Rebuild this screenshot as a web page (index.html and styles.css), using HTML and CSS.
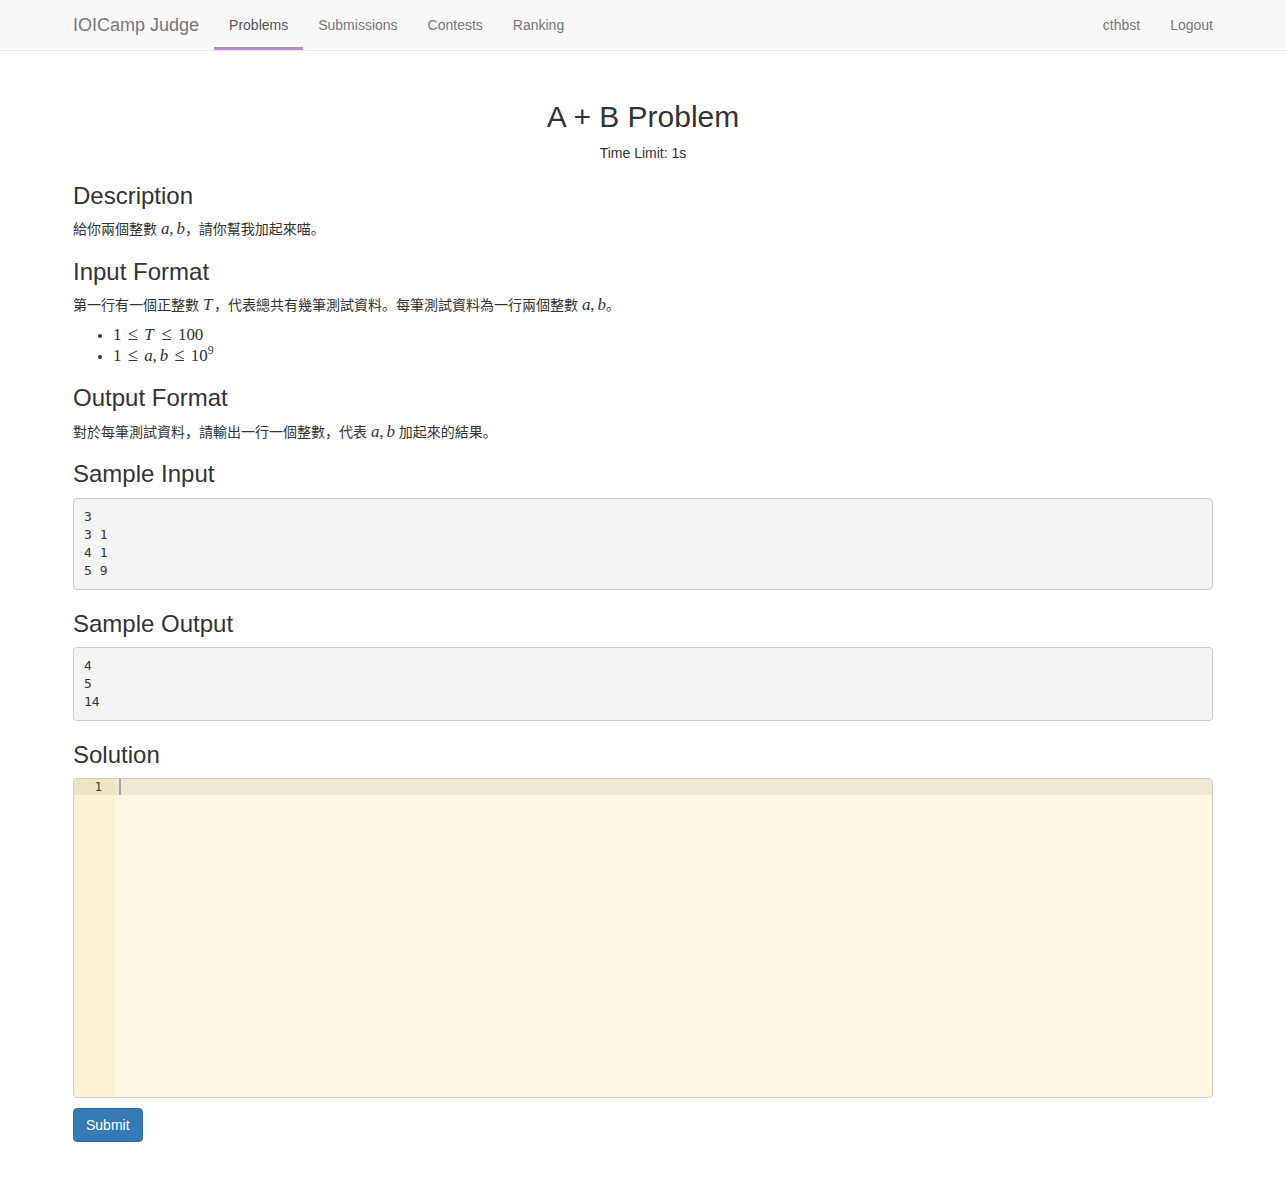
FILE: index.html
```html
<!DOCTYPE html>
<html lang="en">
<head>
<meta charset="utf-8">
<title>A + B Problem - IOICamp Judge</title>
<link rel="stylesheet" href="styles.css">
</head>
<body>
<nav class="navbar">
  <div class="container nav-inner">
    <a class="brand" href="#">IOICamp Judge</a>
    <ul class="nav">
      <li class="active"><a href="#">Problems</a></li>
      <li><a href="#">Submissions</a></li>
      <li><a href="#">Contests</a></li>
      <li><a href="#">Ranking</a></li>
    </ul>
    <ul class="nav nav-right">
      <li><a href="#">cthbst</a></li>
      <li><a href="#">Logout</a></li>
    </ul>
  </div>
</nav>

<main class="container main">
  <h2 class="title">A + B Problem</h2>
  <div class="limit">Time Limit: 1s</div>

  <h3>Description</h3>
  <p>給你兩個整數 <span class="math"><i>a</i>,<span class="thin"></span><i>b</i></span>，請你幫我加起來喵。</p>

  <h3>Input Format</h3>
  <p>第一行有一個正整數 <span class="math"><i class="wide">T</i></span>，代表總共有幾筆測試資料。每筆測試資料為一行兩個整數 <span class="math"><i>a</i>,<span class="thin"></span><i>b</i></span>。</p>
  <ul class="list">
    <li><span class="math">1<span class="rel">≤</span><i class="wide">T</i><span class="rel">≤</span>100</span></li>
    <li><span class="math">1<span class="rel">≤</span><i>a</i>,<span class="thin"></span><i>b</i><span class="rel">≤</span>10<sup>9</sup></span></li>
  </ul>

  <h3>Output Format</h3>
  <p>對於每筆測試資料，請輸出一行一個整數，代表 <span class="math"><i>a</i>,<span class="thin"></span><i>b</i></span> 加起來的結果。</p>

  <h3>Sample Input</h3>
  <pre>3
3 1
4 1
5 9</pre>

  <h3>Sample Output</h3>
  <pre>4
5
14</pre>

  <h3>Solution</h3>
  <div class="editor">
    <div class="gutter">
      <div class="gutter-cell active">1</div>
    </div>
    <div class="code">
      <div class="code-line active"><span class="cursor"></span></div>
    </div>
  </div>
  <button class="btn" type="button">Submit</button>
</main>
</body>
</html>
```

FILE: styles.css
```css
* { box-sizing: border-box; }

html, body {
  margin: 0;
  padding: 0;
}

body {
  font-family: "Liberation Sans", "Noto Sans CJK SC", sans-serif;
  font-size: 14px;
  line-height: 20px;
  color: #333;
  background: #fff;
}

a { text-decoration: none; }

.container {
  width: 1170px;
  margin: 0 auto;
  padding: 0 15px;
}

.navbar {
  height: 51px;
  background: #f8f8f8;
  border-bottom: 1px solid #e7e7e7;
}

.nav-inner {
  display: flex;
  align-items: stretch;
  height: 50px;
}

.brand {
  margin-left: -15px;
  padding: 15px;
  font-size: 18px;
  line-height: 20px;
  color: #777;
}

.nav {
  display: flex;
  list-style: none;
  margin: 0;
  padding: 0;
}

.nav li a {
  display: block;
  padding: 15px 15px 12px;
  line-height: 20px;
  color: #777;
  border-bottom: 3px solid transparent;
}

.nav li.active a {
  color: #555;
  border-bottom-color: #b28fd6;
}

.nav-right {
  margin-left: auto;
  margin-right: -15px;
}

.main {
  padding-top: 49px;
  padding-bottom: 40px;
}

.title {
  font-size: 30px;
  font-weight: 400;
  line-height: 33px;
  text-align: center;
  margin: 0 0 10px;
  color: #333;
}

.limit {
  text-align: center;
}

h3 {
  font-size: 24px;
  font-weight: 400;
  line-height: 26.4px;
  margin: 20px 0 10px;
  color: #333;
}

p {
  margin: 0;
}

p + h3 {
  margin-top: 19.5px;
}

.list + h3 {
  margin-top: 19px;
}

pre + h3 {
  margin-top: 21px;
}

.math {
  font-family: "Liberation Serif", "DejaVu Serif", serif;
  font-size: 1.21em;
  line-height: 0;
  white-space: nowrap;
}

.math i {
  font-style: italic;
}

.math i.wide {
  margin-right: 0.1em;
}

.math .thin {
  display: inline-block;
  width: 0.1667em;
}

.math .rel {
  display: inline-block;
  width: 0.778em;
  font-size: 1.1em;
  text-align: center;
  margin: 0 0.22em;
}

.math sup {
  font-size: 0.7em;
  vertical-align: 0;
  position: relative;
  top: -0.55em;
  line-height: 0;
}

.list {
  margin: 9px 0 0;
  padding: 1px 0 0 40px;
}

.list li {
  line-height: 20.5px;
}

pre {
  margin: 0;
  padding: 9px 10px;
  font-family: "DejaVu Sans Mono", monospace;
  font-size: 13px;
  line-height: 18px;
  color: #333;
  background: #f4f4f4;
  border: 1px solid #ccc;
  border-radius: 4px;
}

.editor {
  display: flex;
  height: 320px;
  border: 1px solid #ccc;
  border-radius: 4px;
  background: #fdf6e3;
  overflow: hidden;
  font-family: "DejaVu Sans Mono", monospace;
  font-size: 12px;
  line-height: 16px;
}

.gutter {
  width: 41px;
  flex: none;
  background: #fbf1d3;
  color: #333;
}

.gutter-cell {
  height: 16px;
  text-align: right;
  padding-right: 13px;
}

.gutter-cell.active {
  background: #ede5c1;
}

.code {
  flex: 1;
}

.code-line {
  height: 16px;
  position: relative;
}

.code-line.active {
  background: #eee8d5;
}

.cursor {
  position: absolute;
  left: 4px;
  top: 0;
  width: 2px;
  height: 16px;
  background: #a9a59a;
}

.btn {
  margin-top: 10px;
  padding: 6px 12px;
  font-family: "Liberation Sans", sans-serif;
  font-size: 14px;
  line-height: 20px;
  color: #fff;
  background: #337ab7;
  border: 1px solid #2e6da4;
  border-radius: 4px;
  cursor: pointer;
}
```
